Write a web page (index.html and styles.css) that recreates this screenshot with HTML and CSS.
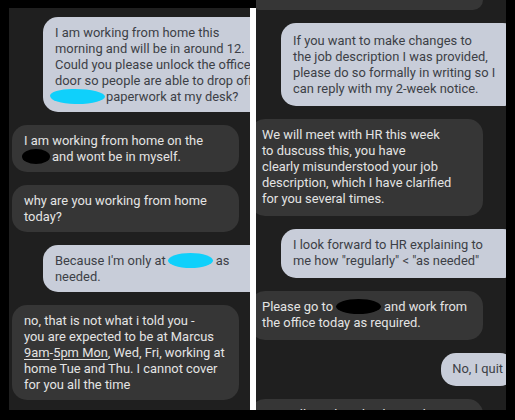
FILE: index.html
```html
<!DOCTYPE html>
<html lang="en">
<head>
  <meta charset="UTF-8" />
  <meta name="viewport" content="width=device-width, initial-scale=1" />
  <title>Messages</title>
  <link rel="stylesheet" href="styles.css">
</head>
<body>

  <div class="screens">

    <!-- Left screenshot -->
    <section class="chat chat-left">
      <div class="msg out">I am working from home this<br>morning and will be in around 12.<br>Could you please unlock the office<br>door so people are able to drop off<br><span class="blot cyan blot-1"></span>paperwork at my desk?</div>

      <div class="msg in">I am working from home on the<br><span class="blot black blot-2"></span>and wont be in myself.</div>

      <div class="msg in">why are you working from home<br>today?</div>

      <div class="msg out">Because I'm only at<span class="blot cyan blot-3"></span>as<br>needed.</div>

      <div class="msg in">no, that is not what i told you -<br>you are expected to be at Marcus<br><u>9am</u>-<u>5pm Mon</u>, Wed, Fri, working at<br>home Tue and Thu. I cannot cover<br>for you all the time</div>
    </section>

    <div class="divider"></div>

    <!-- Right screenshot -->
    <section class="chat chat-right">
      <div class="msg in frag"></div>

      <div class="msg out first">If you want to make changes to<br>the job description I was provided,<br>please do so formally in writing so I<br>can reply with my 2-week notice.</div>

      <div class="msg in">We will meet with HR this week<br>to duscuss this, you have<br>clearly misunderstood your job<br>description, which I have clarified<br>for you several times.</div>

      <div class="msg out">I look forward to HR explaining to<br>me how "regularly" &lt; "as needed"</div>

      <div class="msg in">Please go to<span class="blot black blot-4"></span>and work from<br>the office today as required.</div>

      <div class="msg out quit">No, I quit</div>

      <div class="msg in">You will need to check in with me</div>
    </section>

  </div>

</body>
</html>
```

FILE: styles.css
```css
body {
  margin: 0;
  background-color: #000;
  font-family: Roboto, "Noto Sans", Arial, sans-serif;
}

.screens {
  display: flex;
  align-items: flex-start;
  width: 515px;
  height: 420px;
  overflow: hidden;
}

.chat {
  display: flex;
  flex-direction: column;
  background-color: #1f1f1f;
  overflow: hidden;
  box-sizing: border-box;
}

.chat-left {
  width: 241px;
  height: 402px;
  margin: 8px 0 0 9px;
  padding-top: 9px;
  gap: 13px;
}

.chat-right {
  width: 250px;
  height: 410px;
  gap: 13px;
}

.divider {
  width: 6px;
  height: 402px;
  margin-top: 8px;
  background-color: #fff;
}

/* bubbles */
.msg {
  flex-shrink: 0;
  box-sizing: border-box;
  padding: 8px 12px 7px;
  border-radius: 15px;
  font-size: 12.9px;
  line-height: 16px;
  white-space: nowrap;
}

.out {
  background-color: #c8cdd9;
  color: #3c3f46;
}

.in {
  background-color: #363636;
  color: #e4e4e4;
}

.msg u {
  text-underline-offset: 2px;
}

.chat-left .out {
  margin-left: 34px;
  margin-right: -20px;
}

.chat-left .in {
  width: 227px;
  margin-left: 3px;
}

.chat-right .msg {
  padding-bottom: 9px;
}

.chat-right .out {
  margin-left: 25px;
  margin-right: -12px;
}

.chat-right .first {
  padding-top: 10px;
}

.chat-right .in {
  width: 233px;
  margin-left: -6px;
}

.chat-right .frag {
  height: 10px;
  padding: 0;
  border-radius: 0 0 15px 15px;
}

.chat-right .quit {
  align-self: flex-end;
  margin-right: -9px;
  padding-left: 11px;
}

/* scribbled-out names */
.blot {
  display: inline-block;
  height: 15px;
  vertical-align: -3px;
  border-radius: 50%;
}

.cyan {
  background-color: #0fd0fb;
}

.black {
  background-color: #000;
}

.blot-1 {
  width: 55px;
  margin: 0 1px 0 -5px;
  border-radius: 40% 55% 50% 45% / 45% 50% 50% 55%;
}

.blot-2 {
  width: 28px;
  margin: 0 2px 0 -2px;
}

.blot-3 {
  width: 45px;
  margin: 0 3px 0 2px;
}

.blot-4 {
  width: 45px;
  margin: 0 3px 0 3px;
}
```
